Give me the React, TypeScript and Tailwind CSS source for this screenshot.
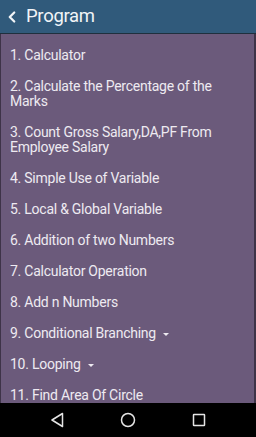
import { ChevronLeft } from 'lucide-react';

const items: { label: string; dropdown?: boolean }[] = [
  { label: '1. Calculator' },
  { label: '2. Calculate the Percentage of the Marks' },
  { label: '3. Count Gross Salary,DA,PF From Employee Salary' },
  { label: '4. Simple Use of Variable' },
  { label: '5. Local & Global Variable' },
  { label: '6. Addition of two Numbers' },
  { label: '7. Calculator Operation' },
  { label: '8. Add n Numbers' },
  { label: '9. Conditional Branching', dropdown: true },
  { label: '10. Looping', dropdown: true },
  { label: '11. Find Area Of Circle' },
];

export default function App() {
  return (
    <div className="w-[256px] h-[437px] flex flex-col overflow-hidden bg-black" style={{ fontFamily: 'Roboto, "Noto Sans", sans-serif' }}>
      {/* Toolbar */}
      <div className="h-[34px] shrink-0 bg-[#305a7b] flex items-center text-[#f1f4f7] border-b border-[#1f2f3d]">
        <ChevronLeft className="w-[18px] h-[18px] ml-[3px]" strokeWidth={3} />
        <span className="ml-[5px] text-[18.5px] tracking-[-0.3px] leading-none">Program</span>
      </div>

      {/* List */}
      <div className="flex-1 overflow-hidden bg-[#6b5a7b] border-l border-r-2 border-[#3e3348] pt-[6px]">
        {items.map((item) => (
          <div key={item.label} className="pl-[9px] pr-[30px] py-[8px] text-[14px] tracking-[-0.25px] leading-[15px] text-[#eeeaf1]">
            {item.label}
            {item.dropdown && (
              <span className="inline-block ml-[7px] align-middle w-0 h-0 border-l-[3px] border-r-[3px] border-t-[3px] border-l-transparent border-r-transparent border-t-[#eeeaf1]" />
            )}
          </div>
        ))}
      </div>

      {/* Navigation bar */}
      <div className="h-[34px] shrink-0 bg-black flex items-center justify-between px-[49px]">
        <svg width="16" height="16" viewBox="0 0 16 16" fill="none" stroke="#e5e5e5" strokeWidth="1.5" strokeLinejoin="round">
          <path d="M13.5 1.5 L3 8 L13.5 14.5 Z" />
        </svg>
        <svg width="16" height="16" viewBox="0 0 16 16" fill="none" stroke="#e5e5e5" strokeWidth="1.5">
          <circle cx="8" cy="8" r="6.5" />
        </svg>
        <svg width="16" height="16" viewBox="0 0 16 16" fill="none" stroke="#e5e5e5" strokeWidth="1.5">
          <rect x="2.5" y="2.5" width="11" height="11" rx="0.5" />
        </svg>
      </div>
    </div>
  );
}
